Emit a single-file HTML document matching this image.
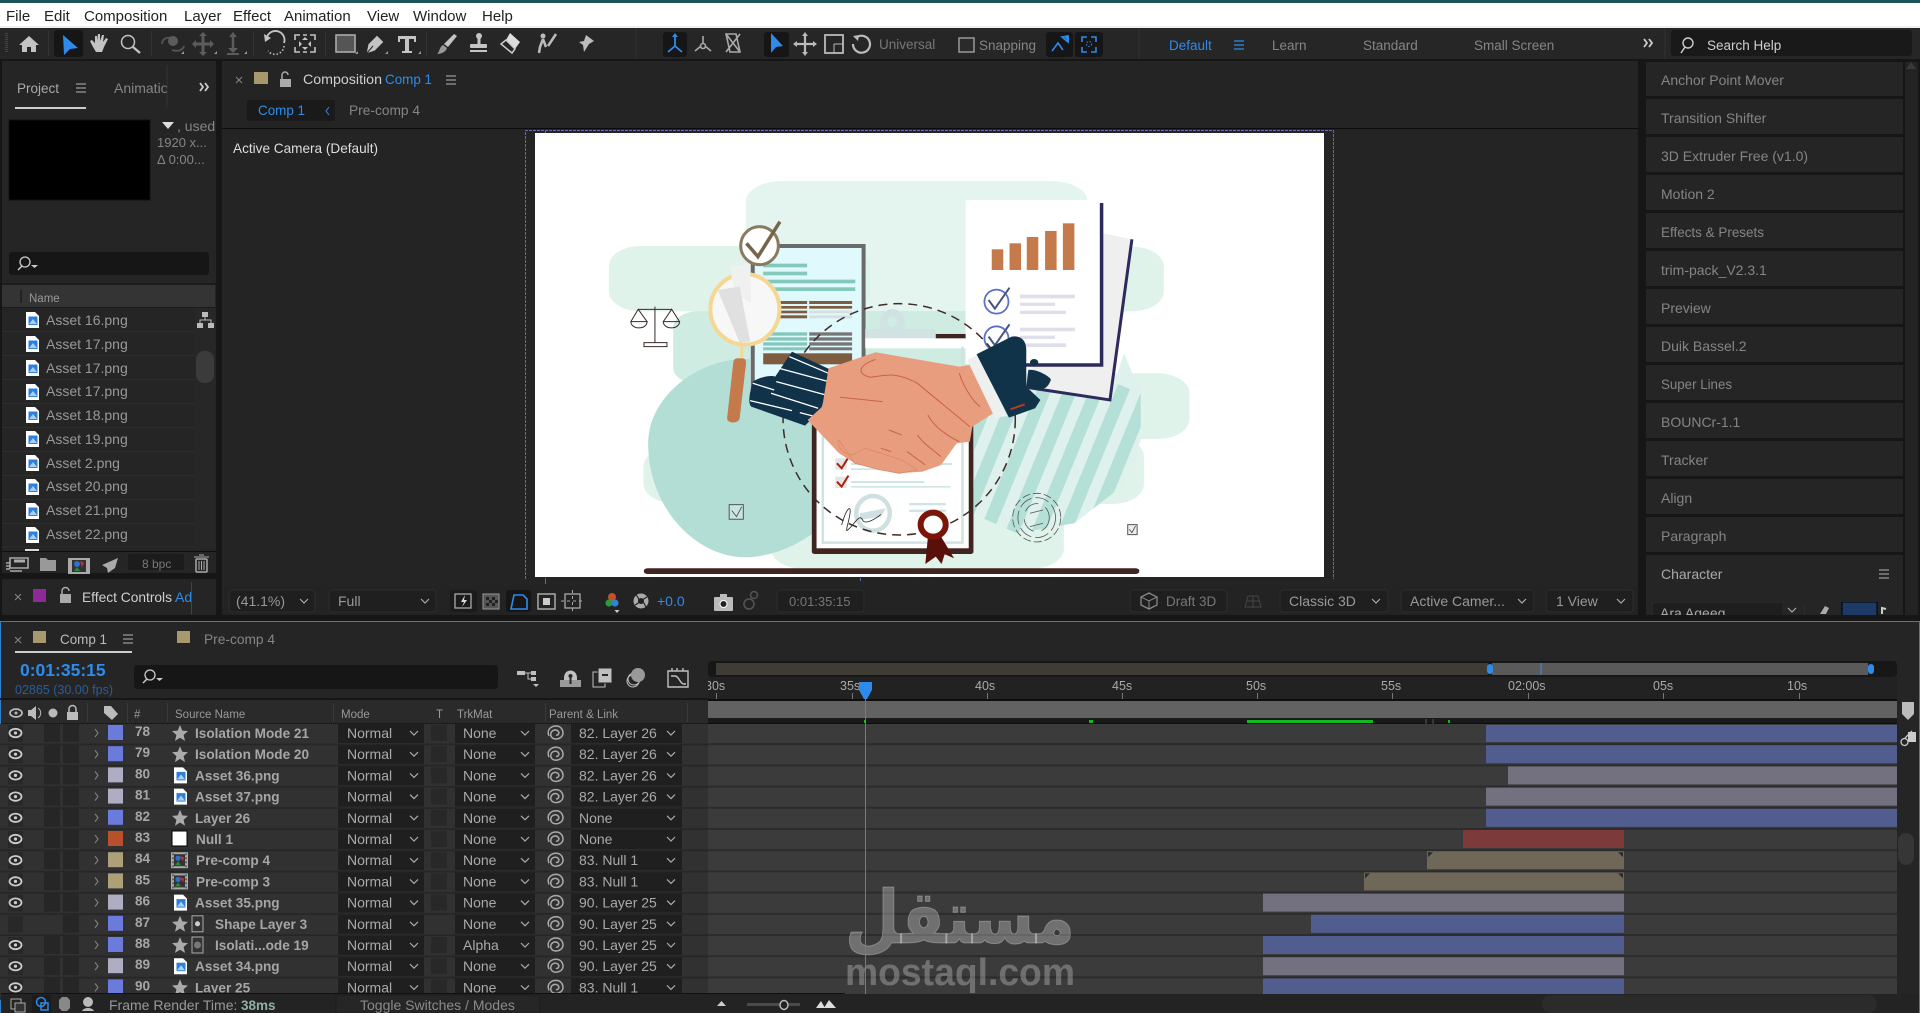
<!DOCTYPE html>
<html lang="en"><head><meta charset="utf-8"><title>After Effects</title>
<style>
html,body{margin:0;padding:0;background:#232323;width:1920px;height:1013px;overflow:hidden}
svg{display:block;position:absolute;left:0;top:0}
text{font-family:"Liberation Sans",sans-serif;font-size:14px;fill:#999;white-space:pre}
.m{font-size:15px;fill:#222}
.g{fill:#858585}.l{fill:#cfcfcf}.b{fill:#2d8ceb}
.w{font-size:13.5px;fill:#858585}
.h{font-size:11.5px;fill:#999}
.n{font-size:13.6px;font-weight:bold;fill:#a6a6a6}
.d{fill:#aaa}
.r{font-size:12.5px;fill:#aaa}
.nss *{vector-effect:non-scaling-stroke}
</style></head><body>
<svg width="1920" height="1013" viewBox="0 0 1920 1013" xmlns="http://www.w3.org/2000/svg">
<defs>
<g id="chev"><polyline points="-4,-2 0,2 4,-2" fill="none" stroke="#aaa" stroke-width="1.2"/></g>
<g id="burger"><path d="M-5-4H5M-5 0H5M-5 4H5" stroke="#999" stroke-width="1.3"/></g>
<g id="png"><path d="M0 0h9l4 4v12H0z" fill="#fff"/><rect x="2.5" y="4.5" width="9" height="8.5" fill="#2f7fd8"/><path d="M3 12l4-5 4 5z" fill="#a8d0f5"/></g>
<g id="star"><path d="M8 0l2.3 5.6 5.7.5-4.4 3.8 1.4 6L8 12.7 3 15.9l1.4-6L0 6.1l5.7-.5z" fill="#aaa"/></g>
<g id="pre"><rect width="17" height="16" fill="#aaa"/><rect x="3" y="2" width="11" height="12" fill="#333"/><path d="M2 1v14M15 1v14" stroke="#222" stroke-dasharray="2 2"/><circle cx="7" cy="6" r="2.6" fill="#2e6fd0"/><path d="M9 4l4 1-1 4z" fill="#c33"/><path d="M4 13l3-4 3 4z" fill="#2a8a3a"/></g>
<g id="row">
<rect x="0" width="708" height="21.2" fill="#313131"/><rect x="708" width="1189" height="21.2" fill="#3b3b3b"/>
<rect x="0" y="19.6" width="708" height="1.6" fill="#262626"/><rect x="708" y="19.2" width="1189" height="2" fill="#2c2c2c"/>
<rect x="8" y="1" width="15" height="17" fill="#282828"/>
<rect x="44" y="0" width="16" height="18" fill="#262626"/><rect x="63" y="0" width="16" height="18" fill="#262626"/>
<polyline points="95,5 98,9 95,13" fill="none" stroke="#8a8a8a"/>
<rect x="338" y="0" width="86" height="19" fill="#1f1f1f"/><use href="#chev" x="414" y="9"/>
<text x="347" y="14" class="d">Normal</text>
<rect x="431" y="1" width="16" height="16" fill="#282828"/>
<rect x="455" y="0" width="80" height="19" fill="#1f1f1f"/><use href="#chev" x="525" y="9"/>
<path d="M549 12C546 5 552 2 556 2 561 2 563 6 563 9 563 13 559 15 556 15 552 15 550 12 551 9 552 6 556 5 558 7 560 9 558 12 556 11" fill="none" stroke="#aaa" stroke-width="1.5"/>
<rect x="571" y="0" width="111" height="19" fill="#1f1f1f"/><use href="#chev" x="671" y="9"/>
</g>
<g id="eye"><ellipse cx="15.5" cy="9" rx="6" ry="4.2" fill="none" stroke="#ccc" stroke-width="1.8"/><circle cx="15.5" cy="9" r="1.6" fill="#ccc"/></g>
<clipPath id="stripeclip"><path d="M1155 700L1187 820V960L1150 1100 1060 1210 950 1240 885 1195 868 1180V900L960 800 1125 840z"/></clipPath>
</defs>

<!-- base -->
<rect width="1920" height="1013" fill="#161616"/>
<rect width="1920" height="3" fill="#1c565c"/>
<rect y="3" width="1920" height="24" fill="#fff"/>
<rect y="26" width="1920" height="2" fill="#efefef"/>
<text x="6" y="21" class="m">File</text><text x="44" y="21" class="m">Edit</text><text x="84" y="21" class="m">Composition</text><text x="184" y="21" class="m">Layer</text><text x="233" y="21" class="m">Effect</text><text x="284" y="21" class="m">Animation</text><text x="367" y="21" class="m">View</text><text x="413" y="21" class="m">Window</text><text x="482" y="21" class="m">Help</text>

<!-- toolbar -->
<rect y="28" width="1920" height="31" fill="#262626"/>
<path d="M6.500 33v19" stroke="#444" stroke-width="3" stroke-dasharray="1 1"/>
<path d="M19 45l10-9 10 9h-3v7h-5v-5h-4v5h-5v-7z" fill="#c4c4c4"/>
<path d="M48.500 31v25M151.500 31v25M253.500 31v25M325.500 31v25M426.500 31v25" stroke="#333"/>
<rect x="54" y="30" width="29" height="27" rx="3" fill="#161616"/>
<path d="M63 35L78 48 70 49 64 55z" fill="#2d8ceb"/>
<path d="M93 47l-3-6 2-1 3 3 0-7 2 0 0 5 1-7 2 0 0 7 2-6 2 0-1 7 3-4 2 1-4 8-2 5h-6z" fill="#c4c4c4"/>
<circle cx="128" cy="42" r="6.500" fill="none" stroke="#c4c4c4" stroke-width="1.500"/><path d="M133 47l7 6" stroke="#c4c4c4" stroke-width="2.200"/>
<g fill="none" stroke="#555" stroke-width="1.800"><path d="M162 44c0-6 6-7 10-6M184 46c-1 4-6 6-12 4"/></g>
<circle cx="173" cy="41" r="5" fill="#5c5c5c"/>
<path d="M203 35v18M194 44h18" stroke="#5c5c5c" stroke-width="3"/><path d="M203 32l-4 4h8zM203 56l-4-4h8zM192 44l4-4v8zM214 44l-4-4v8z" fill="#5c5c5c"/>
<path d="M233 35v14" stroke="#5c5c5c" stroke-width="2.500"/><path d="M233 32l-4 5h8zM233 53l-5-5h10zM227 53h12v2h-12z" fill="#5c5c5c"/>
<path d="M181 54l3-3v3zM214 54l3-3v3zM244 54l3-3v3zM355 54l3-3v3zM385 54l3-3v3zM418 54l3-3v3z" fill="#999"/>
<path d="M267 37a9 9 0 0 1 17 6" fill="none" stroke="#c4c4c4" stroke-width="1.800"/><path d="M284 46a9 9 0 0 1-16 5" fill="none" stroke="#c4c4c4" stroke-width="1.600" stroke-dasharray="1.500 2"/><path d="M264 34l1 8 6-4z" fill="#c4c4c4"/>
<g fill="none" stroke="#c4c4c4" stroke-width="1.600"><path d="M295 40v-5h5M315 40v-5h-5M295 47v5h5M315 47v5h-5M303 35h4M303 52h4"/></g><path d="M302 40l3-3 3 3zM302 47l3 3 3-3zM299 41v6l3-3zM311 41v6l-3-3z" fill="#c4c4c4"/>
<rect x="336" y="35" width="19" height="17" fill="#555" stroke="#aaa" stroke-width="1.600"/>
<path d="M366 54l2-10 9-9 7 7-9 9zM373 46l-6 7" fill="#c4c4c4" stroke="#262626"/>
<path d="M398 36h18v6h-2v-3h-5v12h3v2h-10v-2h3V39h-5v3h-2z" fill="#c4c4c4"/>
<path d="M454 34l3 2-9 11-4-3z" fill="#c4c4c4"/><path d="M443 45l4 3c-1 4-6 6-10 6 3-2 2-7 6-9z" fill="#999"/>
<circle cx="479" cy="36" r="3" fill="#c4c4c4"/><path d="M479 37v7" stroke="#c4c4c4" stroke-width="3"/><rect x="470" y="44" width="17" height="4" rx="1" fill="#c4c4c4"/><rect x="470" y="50" width="17" height="2" fill="#c4c4c4"/>
<path d="M510 33l10 9-5 7-9-9z" fill="#ddd"/><path d="M506 40l9 9-3 4-11-9z" fill="none" stroke="#ccc" stroke-width="1.500"/>
<circle cx="543" cy="36" r="2.500" fill="#bbb"/><path d="M543 39l-3 8-1 6M543 39l3 8M556 34l-8 12" stroke="#bbb" stroke-width="2.500" fill="none"/>
<path d="M586 35l8 6-5 3-5 8-1-7-4-3 5-1z" fill="#bbb"/>
<path d="M636 28v31" stroke="#333"/>
<rect x="663" y="32" width="24" height="25" rx="3" fill="#161616"/>
<g fill="none" stroke="#2d8ceb" stroke-width="1.800"><path d="M675 36v10l-7 6M675 46l7 6"/></g><path d="M675 33l-3 4h6z" fill="#2d8ceb"/>
<g fill="none" stroke="#aaa" stroke-width="1.600"><path d="M703 36v8M695 51l6-5M711 51l-6-5"/><circle cx="703" cy="46" r="2.500"/><path d="M726 34l14 18M740 34l-14 18M726 34h10l4 18h-10z"/></g>
<rect x="764" y="32" width="25" height="25" rx="3" fill="#161616"/><path d="M771 33v20l5-6 7-1z" fill="#2d8ceb"/>
<path d="M805 34v20M795 44h20" stroke="#bbb" stroke-width="2.200"/><path d="M805 32l-3 4h6zM805 56l-3-4h6zM793 44l4-3v6zM817 44l-4-3v6z" fill="#bbb"/>
<rect x="825" y="35" width="18" height="18" fill="none" stroke="#bbb" stroke-width="1.800"/><path d="M834 44h9M834 44v9" stroke="#bbb"/>
<path d="M857 37a8.500 8.500 0 1 1-4 7" fill="none" stroke="#bbb" stroke-width="2.200"/><path d="M853 36l6-1-1 6z" fill="#bbb"/>
<text x="879" y="49" style="fill:#777;font-size:13.500px">Universal</text>
<rect x="959" y="38" width="15" height="14" fill="#2a2a2a" stroke="#999" stroke-width="1.500"/>
<text x="979" y="50" class="w">Snapping</text>
<rect x="1046" y="32" width="27" height="25" rx="3" fill="#161616"/><path d="M1052 51l6-8 5 7M1062 37l6-1v6z" fill="none" stroke="#2d8ceb" stroke-width="1.600"/><path d="M1063 36h6v6z" fill="#2d8ceb"/>
<rect x="1075" y="32" width="28" height="25" rx="3" fill="#161616"/><path d="M1082 42v-5h5M1096 42v-5h-5M1082 47v5h5M1096 47v5h-5" fill="none" stroke="#2d8ceb" stroke-width="1.600"/><circle cx="1089" cy="44" r="2.500" fill="none" stroke="#2d8ceb" stroke-dasharray="1.500 1.500"/>
<path d="M1139 28v31" stroke="#333"/>
<text x="1169" y="50" class="b" style="font-size:13.500px">Default</text>
<g transform="translate(1239 45)"><path d="M-5-4H5M-5 0H5M-5 4H5" stroke="#2d8ceb" stroke-width="1.300"/></g>
<text x="1272" y="50" class="w">Learn</text><text x="1363" y="50" class="w">Standard</text><text x="1474" y="50" class="w">Small Screen</text>
<path d="M1644 39l3 4-3 4M1649 39l3 4-3 4" fill="none" stroke="#ccc" stroke-width="1.800"/>
<path d="M1665 28v31" stroke="#333"/>
<rect x="1671" y="30" width="241" height="26" rx="3" fill="#191919"/>
<circle cx="1688" cy="43" r="5" fill="none" stroke="#ccc" stroke-width="1.400"/><path d="M1685 47l-4 6" stroke="#ccc" stroke-width="1.500"/>
<text x="1707" y="50" class="l" style="font-size:13.500px">Search Help</text>

<!-- project panel -->
<rect x="2" y="61" width="214" height="512" fill="#252525"/>
<text x="17" y="93" style="fill:#aaa;font-size:13.500px">Project</text>
<use href="#burger" x="81" y="88"/>
<rect x="15" y="107" width="71" height="2" fill="#ccc"/>
<svg x="114" y="70" width="53" height="40"><text x="0" y="23" class="g">Animation</text></svg>
<path d="M167 65v43" stroke="#333"/>
<path d="M200 83l3 4-3 4M205 83l3 4-3 4" fill="none" stroke="#ccc" stroke-width="1.800"/>
<rect x="9" y="120" width="141" height="80" fill="#000" stroke="#111"/>
<path d="M162 122h12l-6 7z" fill="#ddd"/>
<text x="177" y="131" class="g">, used</text>
<text x="157" y="147" class="g" style="font-size:13px">1920 x...</text>
<text x="157" y="164" class="g" style="font-size:13px">Δ 0:00...</text>
<rect x="9" y="252" width="200" height="23" rx="3" fill="#161616"/>
<circle cx="25" cy="262" r="5" fill="none" stroke="#ccc" stroke-width="1.300"/><path d="M22 266l-4 4" stroke="#ccc" stroke-width="1.500"/><path d="M31 265h7l-3.500 3z" fill="#ccc"/>
<rect x="2" y="283" width="214" height="2" fill="#1c1c1c"/>
<rect x="2" y="285" width="213" height="22" fill="#343434"/>
<path d="M21 290v13" stroke="#111"/>
<text x="29" y="302" style="font-size:11.500px;fill:#999">Name</text>
<path d="M2 307.500H215" stroke="#111" stroke-dasharray="1 1"/>
<g stroke="#2e2e2e"><path d="M2 331.500H195M2 355.500H195M2 379.500H195M2 403.500H195M2 427.500H195M2 451.500H195M2 475.500H195M2 499.500H195M2 523.500H195M2 547H195"/></g>
<rect x="195" y="308" width="20" height="243" fill="#272727"/>
<rect x="196" y="351" width="18" height="32" rx="8" fill="#3b3b3b"/>
<g fill="#bbb"><rect x="202" y="312" width="6" height="5"/><rect x="197" y="323" width="6" height="5"/><rect x="208" y="323" width="6" height="5"/><path d="M200 323v-3h11v3M205 317v3" fill="none" stroke="#bbb"/></g>
<g><use href="#png" x="26" y="312"/><use href="#png" x="26" y="336"/><use href="#png" x="26" y="360"/><use href="#png" x="26" y="384"/><use href="#png" x="26" y="407"/><use href="#png" x="26" y="431"/><use href="#png" x="26" y="455"/><use href="#png" x="26" y="479"/><use href="#png" x="26" y="503"/><use href="#png" x="26" y="527"/></g>
<text x="46" y="325">Asset 16.png</text><text x="46" y="349">Asset 17.png</text><text x="46" y="373">Asset 17.png</text><text x="46" y="396">Asset 17.png</text><text x="46" y="420">Asset 18.png</text><text x="46" y="444">Asset 19.png</text><text x="46" y="468">Asset 2.png</text><text x="46" y="491">Asset 20.png</text><text x="46" y="515">Asset 21.png</text><text x="46" y="539">Asset 22.png</text>
<rect x="2" y="549" width="214" height="24" fill="#252525"/>
<rect x="25" y="549" width="14" height="2" fill="#ddd"/>
<rect x="2" y="551" width="214" height="1" fill="#0f0f0f"/>
<path d="M10 558h18v10H10zM6 563h4M6 566h4M6 569h4M10 571h12" fill="none" stroke="#aaa" stroke-width="1.600"/><path d="M14 561h11" stroke="#aaa" stroke-width="3"/>
<path d="M40 558h6l2 2h8v11H40z" fill="#999"/>
<rect x="68" y="558" width="22" height="16" fill="#aaa"/><rect x="72" y="560" width="14" height="12" fill="#333"/><circle cx="77" cy="564" r="3" fill="#2e6fd0"/><path d="M80 561l4 2-2 4z" fill="#c33"/><path d="M74 571l3-4 3 4z" fill="#2a8a3a"/>
<path d="M102 565l16-7-3 10-7 5-1-5z" fill="#aaa"/>
<rect x="127" y="553" width="58" height="18" rx="3" fill="#1c1c1c" stroke="#2c2c2c"/>
<text x="142" y="568" style="font-size:12px;fill:#777">8 bpc</text>
<rect x="196" y="559" width="11" height="13" rx="1" fill="none" stroke="#aaa" stroke-width="1.500"/><path d="M194 557h15M199 555h5M199 561v9M201.500 561v9M204 561v9" stroke="#aaa"/>

<!-- effect controls tab -->
<rect x="2" y="579" width="214" height="36" fill="#252525"/>
<path d="M15 594l6 6M21 594l-6 6" stroke="#888"/>
<rect x="33" y="589" width="13" height="13" fill="#8e2a97"/>
<rect x="60" y="594" width="11" height="9" fill="#aaa"/><path d="M62 594v-3a3.500 3.500 0 0 1 7 0" fill="none" stroke="#aaa" stroke-width="1.500"/>
<text x="82" y="602" class="l" textLength="90" lengthAdjust="spacingAndGlyphs">Effect Controls</text><text x="175" y="602" class="b">Ad</text>
<path d="M191.500 582v32" stroke="#444"/>

<!-- composition panel -->
<rect x="222" y="61" width="1416" height="554" fill="#242424"/>
<path d="M236 77l6 6M242 77l-6 6" stroke="#888"/>
<rect x="254" y="72" width="14" height="12" fill="#a8986e"/>
<rect x="280" y="79" width="11" height="8" fill="#aaa"/><path d="M282 79v-4a3 3 0 0 1 6 0" fill="none" stroke="#aaa" stroke-width="1.500"/>
<text x="303" y="84" class="l" textLength="79" lengthAdjust="spacingAndGlyphs">Composition</text><text x="385" y="84" class="b" textLength="47" lengthAdjust="spacingAndGlyphs">Comp 1</text>
<use href="#burger" x="451" y="80"/>
<rect x="247" y="100" width="88" height="21" rx="2" fill="#1a1a1a"/>
<text x="258" y="115" class="b" textLength="47" lengthAdjust="spacingAndGlyphs">Comp 1</text><polyline points="329,107 326,111 329,115" fill="none" stroke="#2d8ceb"/>
<text x="349" y="115" class="g" textLength="71" lengthAdjust="spacingAndGlyphs">Pre-comp 4</text>
<rect x="222" y="128" width="1416" height="1" fill="#0c0c0c"/>
<text x="233" y="153" style="fill:#ddd" textLength="145" lengthAdjust="spacingAndGlyphs">Active Camera (Default)</text>

<!-- viewer -->
<path d="M525.500 579V130.500H1333.500V579" fill="none" stroke="#5a6cc0" stroke-dasharray="3 1"/>
<path d="M545.500 130v4M545.500 578v6M860.500 578v3" stroke="#5a6cc0"/>
<rect x="535" y="133" width="789" height="444" fill="#fff"/>
<g class="nss" transform="translate(520 120) scale(.523 .3333)">
<g fill="#e4f5ef">
<rect x="432" y="183" width="653" height="420" rx="70" ry="60"/>
</g>
<g fill="#dff3ea">
<rect x="170" y="378" width="500" height="196" rx="60"/>
<rect x="900" y="380" width="331" height="194" rx="60"/>
<rect x="900" y="760" width="380" height="197" rx="60"/>
<rect x="880" y="950" width="313" height="202" rx="60"/>
<rect x="236" y="980" width="400" height="170" rx="60"/>
<rect x="480" y="1100" width="560" height="246" rx="60"/>
</g>
<rect x="293" y="573" width="630" height="220" rx="50" fill="#cfece2"/>
<g clip-path="url(#stripeclip)"><rect x="860" y="690" width="340" height="560" fill="#dff1ec"/>
<g stroke="#b5e0d7" stroke-width="13" fill="none"><path d="M790 1240L905 800M840 1240L955 800M890 1240L1005 800M940 1240L1055 800M990 1240L1105 800M1040 1240L1155 800M1090 1240L1205 800M1140 1240L1255 800"/></g></g>
<path d="M430 717C520 717 640 850 640 1020 640 1190 520 1312 430 1312 340 1312 245 1170 245 970 245 830 340 717 430 717z" fill="#b2ded5"/>
<!-- back doc -->
<rect x="440" y="372" width="222" height="452" fill="#dff9fc" stroke="none"/>
<path d="M445 378H657V820H445z" fill="none" stroke="#6a6a6a" stroke-width="4"/>
<g fill="#85c7bb"><rect x="465" y="431" width="84" height="11"/><rect x="465" y="455" width="84" height="11"/><rect x="465" y="479" width="176" height="11"/><rect x="465" y="502" width="176" height="11"/><rect x="465" y="637" width="84" height="10"/><rect x="465" y="652" width="84" height="10"/><rect x="465" y="667" width="84" height="10"/><rect x="465" y="682" width="84" height="9"/></g>
<g fill="#7d5c3f"><rect x="465" y="543" width="84" height="9"/><rect x="465" y="558" width="84" height="8"/><rect x="465" y="572" width="84" height="8"/><rect x="465" y="586" width="84" height="9"/><rect x="553" y="543" width="82" height="9"/><rect x="553" y="558" width="82" height="8"/><rect x="465" y="700" width="170" height="33"/></g>
<g fill="#d5dfe0"><rect x="553" y="572" width="82" height="8"/><rect x="553" y="586" width="82" height="9"/></g>
<g fill="#777"><rect x="553" y="637" width="82" height="10"/><rect x="553" y="652" width="82" height="10"/><rect x="553" y="667" width="82" height="10"/><rect x="553" y="682" width="82" height="9"/></g>
<!-- right doc -->
<path d="M1116 340L1170 358 1128 840 960 800z" fill="#efefef"/>
<path d="M1170 358L1128 840 960 800" fill="none" stroke="#2e2a5e" stroke-width="3"/>
<rect x="852" y="240" width="258" height="492" fill="#fff"/>
<path d="M1112 249V735H960" fill="none" stroke="#2e2a5e" stroke-width="3.500"/>
<g fill="#c47a4b"><rect x="902" y="388" width="22" height="62"/><rect x="936" y="370" width="22" height="80"/><rect x="969" y="351" width="22" height="99"/><rect x="1004" y="333" width="22" height="117"/><rect x="1038" y="310" width="22" height="140"/></g>
<ellipse cx="911" cy="545" rx="23" ry="36" fill="none" stroke="#5b70c8" stroke-width="1.800"/>
<polyline points="896,540 908,566 936,503" fill="none" stroke="#46557f" stroke-width="2"/>
<ellipse cx="911" cy="655" rx="23" ry="36" fill="none" stroke="#5b70c8" stroke-width="1.800"/>
<polyline points="896,650 908,676 936,613" fill="none" stroke="#46557f" stroke-width="2"/>
<g fill="#dfdfea"><rect x="956" y="524" width="105" height="11"/><rect x="956" y="548" width="67" height="10"/><rect x="956" y="572" width="88" height="10"/><rect x="956" y="623" width="105" height="11"/><rect x="956" y="647" width="67" height="10"/><rect x="956" y="670" width="88" height="11"/></g>
<!-- clipboard -->
<ellipse cx="712" cy="605" rx="24" ry="38" fill="#d0e2e2"/><ellipse cx="712" cy="605" rx="9" ry="16" fill="#cfece2"/>
<rect x="660" y="628" width="135" height="30" fill="#d0e2e2"/>
<rect x="660" y="655" width="200" height="30" fill="#fff"/>
<rect x="795" y="642" width="57" height="13" fill="#3f2420"/>
<rect x="558" y="880" width="309" height="422" rx="6" fill="#3f2420"/>
<rect x="567" y="880" width="291" height="405" fill="#fff"/>
<path d="M579 880V1268H846V680" fill="none" stroke="#d0e2e2" stroke-width="2.500"/>
<g fill="#e4e4e4"><rect x="603" y="1015" width="22" height="34"/><rect x="603" y="1070" width="22" height="34"/></g>
<polyline points="606,1030 615,1045 628,1012" fill="none" stroke="#a82010" stroke-width="2"/>
<polyline points="606,1085 615,1100 628,1067" fill="none" stroke="#a82010" stroke-width="2"/>
<g fill="#cfe5e4"><rect x="633" y="1029" width="193" height="6"/><rect x="633" y="1045" width="100" height="5"/><rect x="633" y="1083" width="140" height="6"/><rect x="633" y="1098" width="190" height="5"/><rect x="744" y="1149" width="70" height="7"/><rect x="744" y="1169" width="70" height="7"/></g>
<ellipse cx="675" cy="1180" rx="32" ry="52" fill="none" stroke="#cfe0e2" stroke-width="4.500"/>
<path d="M650 1180L700 1165 690 1190 650 1200z" fill="#cfe0e2"/>
<path d="M615 1215C625 1160 635 1150 630 1190S620 1240 630 1225 650 1180 655 1200 690 1185 690 1183" fill="none" stroke="#222" stroke-width=".8"/>
<!-- dashed circle -->
<ellipse cx="725" cy="898" rx="222" ry="347" fill="none" stroke="#3f2a28" stroke-width="1.500" stroke-dasharray="9 6"/>
<!-- ribbon -->
<path d="M780 1250H805L830 1315 812 1303 806 1332 795 1310 775 1332z" fill="#5a0f0a"/>
<ellipse cx="790" cy="1214" rx="24" ry="36" fill="#fff" stroke="#7a1508" stroke-width="6"/>
<!-- magnifier -->
<path d="M420 715C435 715 433 720 430 760L420 895C418 912 396 912 396 895L408 725C409 715 415 715 420 715z" fill="#c47a4b"/>
<ellipse cx="430" cy="568" rx="66" ry="106" fill="#f7f7f7" stroke="#f5d793" stroke-width="4"/>
<path d="M400 440l40-10 2 120-30-30z" fill="#f0f0f0"/>
<path d="M378 510L420 500 440 665 420 668z" fill="#e0e0e0"/>
<path d="M424 672v40" stroke="#f5d793" stroke-width="3"/>
<!-- check -->
<ellipse cx="458" cy="377" rx="36" ry="57" fill="#fff" stroke="#8a7a60" stroke-width="3"/>
<polyline points="433,370 455,410 497,305" fill="none" stroke="#75654b" stroke-width="3.500"/>
<!-- scales -->
<g fill="none" stroke="#3a2a2a" stroke-width="1"><path d="M258 560V668M226 568H290"/><rect x="237" y="668" width="44" height="12"/><path d="M226 568L212 605H243zM290 568L274 605H305z"/><path d="M212 605c0 25 31 25 31 0M274 605c0 25 31 25 31 0"/></g>
<!-- sleeve left -->
<path d="M520 695L592 748 590 800 575 870 545 917 442 860C436 850 438 825 445 785 460 770 480 765 488 770z" fill="#10334a"/>
<g stroke="#fff" stroke-width="1.300" fill="none"><path d="M515 710L590 760M495 745L590 785M490 785L585 825M445 790L486 810M480 820L570 865M440 842L520 872M535 878L560 888"/></g>
<!-- hand -->
<path d="M590 745L680 697 840 740 860 735 905 880 865 920 860 965 835 970 805 1035 770 1055 725 1060 690 1050 640 1030 610 1000 550 900 578 860z" fill="#e89e7e"/>
<g fill="none" stroke="#c9604e" stroke-width="1"><path d="M680 718C650 735 640 760 670 772 700 765 720 755 760 790 790 830 830 880 860 920M612 832L693 845M840 760C850 810 870 850 880 860M705 930L730 945M780 885C790 920 820 950 840 965M760 945C770 970 790 990 805 1010M740 995L775 1035M690 985L710 995"/></g>
<path d="M610 960C605 985 620 1000 635 1005L660 985 690 1000 730 1020 760 1050 725 1060 690 1050 640 1030z" fill="#e89e7e" stroke="#d88a6a" stroke-width=".8"/>
<!-- cuff right -->
<path d="M855 720L875 705 932 888 908 893z" fill="#eef0ef"/>
<path d="M873 703L940 650C960 645 968 665 968 690L968 800 995 840 985 865 935 893z" fill="#10334a"/>
<path d="M938 868L965 853" stroke="#b83a20" stroke-width="2"/>
<path d="M972 750C985 745 1015 770 1015 780 1010 800 1005 810 985 808L968 800z" fill="#10334a"/>
<ellipse cx="983" cy="727" rx="8" ry="10" fill="#10334a"/>
<!-- boxes -->
<rect x="400" y="1154" width="27" height="44" fill="#c8e5df" stroke="#555" stroke-width="1"/><polyline points="405,1172 414,1190 424,1160" fill="none" stroke="#444" stroke-width=".8"/>
<rect x="1162" y="1214" width="18" height="30" fill="#eee" stroke="#555" stroke-width="1"/><polyline points="1165,1228 1170,1238 1177,1218" fill="none" stroke="#444" stroke-width=".8"/>
<g fill="none" stroke="#555" stroke-width=".8"><ellipse cx="988" cy="1193" rx="46" ry="73" stroke-dasharray="8 3"/><ellipse cx="988" cy="1193" rx="36" ry="60" stroke-dasharray="14 4"/><ellipse cx="988" cy="1193" rx="24" ry="42" stroke-dasharray="16 8"/><path d="M975 1180L1000 1170M975 1220L1000 1210"/></g>
<rect x="237" y="1345" width="947" height="17" rx="8" ry="6" fill="#3f2420"/>
</g>

<!-- comp bottom bar -->
<rect x="222" y="586" width="1416" height="29" fill="#232323"/>
<g fill="#1f1f1f" stroke="#2e2e2e"><rect x="229" y="590" width="86" height="22" rx="3"/><rect x="329" y="590" width="107" height="22" rx="3"/><rect x="777" y="590" width="87" height="22" rx="3"/><rect x="1130" y="590" width="97" height="22" rx="3"/><rect x="1280" y="590" width="108" height="22" rx="3"/><rect x="1401" y="590" width="133" height="22" rx="3"/><rect x="1546" y="590" width="87" height="22" rx="3"/></g>
<text x="236" y="606">(41.1%)</text><use href="#chev" x="304" y="601"/>
<text x="338" y="606">Full</text><use href="#chev" x="425" y="601"/>
<rect x="450" y="590" width="27" height="22" rx="3" fill="#1b1b1b"/>
<rect x="455" y="594" width="16" height="14" fill="none" stroke="#aaa" stroke-width="1.300"/><path d="M465 595l-4 7h3l-2 5 5-7h-3z" fill="#ddd"/>
<rect x="483" y="594" width="16" height="15" fill="#555" stroke="#999"/><path d="M486 597h3v3h-3zM492 597h3v3h-3zM489 600h3v3h-3zM495 600h3v3h-3zM486 603h3v3h-3zM492 603h3v3h-3z" fill="#222"/>
<rect x="506" y="590" width="25" height="22" rx="3" fill="#161616"/>
<path d="M511 609l3-14h9l4 4v10z" fill="none" stroke="#2d8ceb" stroke-width="1.600"/>
<rect x="538" y="594" width="17" height="15" fill="none" stroke="#aaa" stroke-width="1.500"/><rect x="543" y="598" width="7" height="7" fill="#ccc"/>
<rect x="565" y="594" width="15" height="14" fill="none" stroke="#aaa" stroke-width="1.300"/><path d="M572.500 590v22M561 601h23" stroke="#aaa" stroke-dasharray="3 3"/>
<circle cx="612" cy="597" r="4" fill="#c2512a"/><circle cx="609" cy="603" r="3.600" fill="#2a9a3a"/><circle cx="615" cy="603" r="3.600" fill="#2e82d8"/>
<path d="M614.500 610h5l-2.500 3z" fill="#ccc"/>
<circle cx="641" cy="601" r="7.500" fill="#aaa"/><circle cx="641" cy="601" r="3" fill="#232323"/><path d="M636 595c2 2 3 4 3 6M647 597c-2 1-4 2-5 4M646 607c-1-2-2-4-3-5M635 605c2-1 4-2 5-4" stroke="#232323" stroke-width="1.200" fill="none"/>
<text x="657" y="606" class="b">+0.0</text>
<rect x="714" y="597" width="19" height="14" rx="1" fill="#bbb"/><rect x="720" y="594" width="7" height="3" fill="#bbb"/><circle cx="723.500" cy="604" r="3.500" fill="#232323" stroke="#fff"/>
<g fill="none" stroke="#555" stroke-width="1.500"><circle cx="749" cy="604" r="5"/><circle cx="754" cy="595" r="3.500"/></g>
<text x="789" y="606" style="fill:#777;font-size:13px">0:01:35:15</text>
<path d="M1149 593l8 4v8l-8 4-8-4v-8z" fill="none" stroke="#888" stroke-width="1.300"/><path d="M1141 597l8 4 8-4M1149 601v8" fill="none" stroke="#888"/>
<text x="1166" y="606" style="fill:#777;font-size:13.500px">Draft 3D</text>
<path d="M1248 596h10l3 11h-16zM1253 596v11M1246 601h14" fill="none" stroke="#444"/>
<text x="1289" y="606">Classic 3D</text><use href="#chev" x="1376" y="601"/>
<text x="1410" y="606">Active Camer...</text><use href="#chev" x="1522" y="601"/>
<text x="1556" y="606">1 View</text><use href="#chev" x="1621" y="601"/>

<!-- right panels -->
<g fill="#252525"><rect x="1646" y="62" width="257" height="34"/><rect x="1646" y="99" width="257" height="35"/><rect x="1646" y="137" width="257" height="35"/><rect x="1646" y="175" width="257" height="35"/><rect x="1646" y="213" width="257" height="35"/><rect x="1646" y="251" width="257" height="35"/><rect x="1646" y="289" width="257" height="35"/><rect x="1646" y="327" width="257" height="35"/><rect x="1646" y="365" width="257" height="35"/><rect x="1646" y="403" width="257" height="35"/><rect x="1646" y="441" width="257" height="35"/><rect x="1646" y="479" width="257" height="35"/><rect x="1646" y="517" width="257" height="35"/><rect x="1646" y="555" width="257" height="60"/></g>
<rect x="1905" y="62" width="13" height="553" fill="#232323"/>
<path d="M1911 62l-5 7h10z" fill="#3a3a3a"/>
<g><text x="1661" y="85" class="g">Anchor Point Mover</text><text x="1661" y="123" class="g">Transition Shifter</text><text x="1661" y="161" class="g">3D Extruder Free (v1.0)</text><text x="1661" y="199" class="g">Motion 2</text><text x="1661" y="237" class="g" textLength="103" lengthAdjust="spacingAndGlyphs">Effects &amp; Presets</text><text x="1661" y="275" class="g">trim-pack_V2.3.1</text><text x="1661" y="313" class="g">Preview</text><text x="1661" y="351" class="g">Duik Bassel.2</text><text x="1661" y="389" class="g" textLength="71" lengthAdjust="spacingAndGlyphs">Super Lines</text><text x="1661" y="427" class="g">BOUNCr-1.1</text><text x="1661" y="465" class="g">Tracker</text><text x="1661" y="503" class="g">Align</text><text x="1661" y="541" class="g">Paragraph</text><text x="1661" y="579" style="fill:#aaa">Character</text></g>
<use href="#burger" x="1884" y="574"/>
<svg x="1652" y="602" width="252" height="13">
<rect x="0" y="0" width="152" height="30" rx="3" fill="#1e1e1e" stroke="#333"/><rect x="130" y="0" width="22" height="30" fill="#252525"/>
<text x="8" y="16" style="fill:#aaa">Ara Aqeeq</text><use href="#chev" x="140" y="8"/>
<path d="M168 12l5-8 4 2-3 6z" fill="#aaa"/>
<rect x="190" y="0" width="35" height="20" fill="#1e3a66" stroke="#000"/>
<path d="M230 12V6l4 1" fill="none" stroke="#ccc" stroke-width="2"/>
</svg>

<!-- timeline panel -->
<rect x="0" y="616" width="1920" height="397" fill="#161616"/>
<rect x="0" y="621" width="1920" height="392" fill="#252525"/>
<path d="M.5 1013V621.500H1919.500V1013" fill="none" stroke="#2d7fd0"/>
<path d="M15 637l6 6M21 637l-6 6" stroke="#888"/>
<rect x="33" y="631" width="13" height="12" fill="#a8986e"/>
<text x="60" y="644" style="fill:#bbb" textLength="47" lengthAdjust="spacingAndGlyphs">Comp 1</text>
<use href="#burger" x="128" y="639"/>
<rect x="15" y="651" width="117" height="2" fill="#ccc"/>
<rect x="177" y="631" width="13" height="12" fill="#a8986e"/>
<text x="204" y="644" class="g" textLength="71" lengthAdjust="spacingAndGlyphs">Pre-comp 4</text>
<text x="20" y="676" style="font-size:17.500px;font-weight:bold;fill:#2d8ceb">0:01:35:15</text>
<text x="15" y="694" style="font-size:12.500px;fill:#2a5c9a">02865 (30.00 fps)</text>
<rect x="134" y="665" width="364" height="24" rx="3" fill="#161616"/>
<circle cx="150" cy="675" r="5" fill="none" stroke="#ccc" stroke-width="1.300"/><path d="M147 679l-4 4" stroke="#ccc" stroke-width="1.500"/><path d="M156 678h7l-3.500 3z" fill="#ccc"/>
<!-- timeline switches -->
<g fill="#c0c0c0">
<path d="M517 671h8v4h-8zM531 671h5v4h-5zM531 677h5v4h-5zM533 684h6l-3 3z"/><path d="M525 673h6M528 673v6h3" stroke="#c0c0c0" fill="none"/>
<path d="M560 680h21v7h-21z" fill="#999"/><path d="M564 680v-2c0-10 13-10 13 0v2z"/><circle cx="570.500" cy="676" r="2" fill="#252525"/><rect x="569.500" y="678" width="2" height="6" fill="#252525"/>
<rect x="593" y="672" width="12" height="15" fill="none" stroke="#c0c0c0"/><rect x="598" y="668" width="14" height="15" stroke="#252525"/><path d="M602 675h6" stroke="#252525" stroke-width="2"/>
<circle cx="633" cy="681" r="6" fill="none" stroke="#c0c0c0"/><circle cx="634" cy="679" r="6" fill="none" stroke="#c0c0c0"/><circle cx="638" cy="675" r="7" fill="#999"/>
</g>
<path d="M668 671h20v16h-20zM672 671v-3M677 671v-3M683 671v-3M671 676h4c4 0 5 8 9 8h2" fill="none" stroke="#c0c0c0" stroke-width="1.400"/>
<!-- layer header -->
<rect x="0" y="698" width="708" height="2" fill="#161616"/>
<rect x="1" y="700" width="707" height="23" fill="#2a2a2a"/>
<path d="M1 723.500H708" stroke="#111" stroke-dasharray="1 1"/>
<ellipse cx="16" cy="713" rx="6" ry="4" fill="none" stroke="#bbb" stroke-width="1.700"/><circle cx="16" cy="713" r="1.500" fill="#bbb"/>
<path d="M28 710h3l5-4v14l-5-4h-3z" fill="#bbb"/><path d="M38 708a6 6 0 0 1 0 10" fill="none" stroke="#bbb"/><circle cx="53" cy="713" r="4.500" fill="#bbb"/>
<rect x="67" y="712" width="11" height="8" fill="#bbb"/><path d="M69 712v-3a3.500 3.500 0 0 1 7 0v3" fill="none" stroke="#bbb" stroke-width="1.500"/>
<path d="M104 706h7l7 8-6 6-8-7z" fill="#bbb"/>
<path d="M87.500 703v19M127.500 703v19M167.500 703v19M333.500 703v19M545.500 703v19M687.500 703v19" stroke="#3a3a3a"/>
<text x="134" y="718" class="h">#</text><text x="175" y="718" class="h">Source Name</text><text x="341" y="718" class="h">Mode</text><text x="436" y="718" class="h">T</text><text x="457" y="718" class="h">TrkMat</text><text x="549" y="718" class="h">Parent &amp; Link</text>

<!-- ruler -->
<rect x="708" y="677" width="1189" height="22" fill="#222"/>
<rect x="708" y="661" width="1189" height="16" rx="4" fill="#171717"/>
<rect x="716" y="663" width="772" height="12" fill="#3e3c34"/>
<rect x="1492" y="663" width="376" height="12" fill="#5a5a5a"/>
<rect x="1487" y="664" width="6" height="10" rx="3" fill="#2d8ceb"/><rect x="1868" y="664" width="6" height="10" rx="3" fill="#2d8ceb"/>
<path d="M1541 663v12" stroke="#3f8ed8"/>
<g><svg x="708" y="677" width="20" height="22"><text x="-3" y="13" class="r">30s</text></svg>
<text x="840" y="690" class="r">35s</text><text x="975" y="690" class="r">40s</text><text x="1112" y="690" class="r">45s</text><text x="1246" y="690" class="r">50s</text><text x="1381" y="690" class="r">55s</text><text x="1508" y="690" class="r">02:00s</text><text x="1653" y="690" class="r">05s</text><text x="1787" y="690" class="r">10s</text></g>
<path d="M716.500 693v6M852.500 693v6M987.500 693v6M1122.500 693v6M1257.500 693v6M1392.500 693v6M1528.500 693v6M1663.500 693v6M1799.500 693v6" stroke="#777"/>
<rect x="708" y="699" width="1189" height="2" fill="#0e0e0e"/>
<rect x="708" y="701" width="1189" height="17" fill="#626262"/>
<rect x="708" y="718" width="1189" height="6" fill="#191919"/>
<rect x="708" y="723" width="1189" height="1" fill="#0e0e0e"/>
<g fill="#14b81f"><rect x="864" y="720" width="2" height="3"/><rect x="1089" y="720" width="4" height="3"/><rect x="1247" y="720" width="126" height="3"/><rect x="1448" y="720" width="2" height="3"/></g>
<path d="M1426 719v5M1433 719v5" stroke="#555"/>

<!-- rows -->
<g transform="translate(0 724)"><use href="#row"/><use href="#eye"/><rect x="108" y="1" width="15" height="15" fill="#6a7bdc"/><text x="135" y="12" class="n">78</text><use href="#star" x="172" y="1"/><text x="195" y="14" class="n">Isolation Mode 21</text><text x="463" y="14" class="d">None</text><text x="579" y="14" class="d">82. Layer 26</text><rect x="1486" y="1" width="411" height="17" fill="#515c8f"/></g>
<g transform="translate(0 745.200)"><use href="#row"/><use href="#eye"/><rect x="108" y="1" width="15" height="15" fill="#6a7bdc"/><text x="135" y="12" class="n">79</text><use href="#star" x="172" y="1"/><text x="195" y="14" class="n">Isolation Mode 20</text><text x="463" y="14" class="d">None</text><text x="579" y="14" class="d">82. Layer 26</text><rect x="1486" y="0" width="411" height="18" fill="#515c8f"/></g>
<g transform="translate(0 766.400)"><use href="#row"/><use href="#eye"/><rect x="108" y="1" width="15" height="15" fill="#aeadc4"/><text x="135" y="12" class="n">80</text><use href="#png" x="174" y="1"/><text x="195" y="14" class="n">Asset 36.png</text><text x="463" y="14" class="d">None</text><text x="579" y="14" class="d">82. Layer 26</text><rect x="1508" y="0" width="389" height="18" fill="#737080"/></g>
<g transform="translate(0 787.600)"><use href="#row"/><use href="#eye"/><rect x="108" y="1" width="15" height="15" fill="#aeadc4"/><text x="135" y="12" class="n">81</text><use href="#png" x="174" y="1"/><text x="195" y="14" class="n">Asset 37.png</text><text x="463" y="14" class="d">None</text><text x="579" y="14" class="d">82. Layer 26</text><rect x="1486" y="0" width="411" height="18" fill="#737080"/></g>
<g transform="translate(0 808.800)"><use href="#row"/><use href="#eye"/><rect x="108" y="1" width="15" height="15" fill="#6a7bdc"/><text x="135" y="12" class="n">82</text><use href="#star" x="172" y="1"/><text x="195" y="14" class="n">Layer 26</text><text x="463" y="14" class="d">None</text><text x="579" y="14" class="d">None</text><rect x="1486" y="0" width="411" height="18" fill="#515c8f"/></g>
<g transform="translate(0 830)"><use href="#row"/><use href="#eye"/><rect x="108" y="1" width="15" height="15" fill="#b9502c"/><text x="135" y="12" class="n">83</text><rect x="172" y="1" width="15" height="15" fill="#fff" stroke="#000"/><text x="196" y="14" class="n">Null 1</text><text x="463" y="14" class="d">None</text><text x="579" y="14" class="d">None</text><rect x="1463" y="0" width="161" height="18" fill="#7d3a3a"/></g>
<g transform="translate(0 851.200)"><use href="#row"/><use href="#eye"/><rect x="108" y="1" width="15" height="15" fill="#ad9f78"/><text x="135" y="12" class="n">84</text><use href="#pre" x="171" y="1"/><text x="196" y="14" class="n">Pre-comp 4</text><text x="463" y="14" class="d">None</text><text x="579" y="14" class="d">83. Null 1</text><rect x="1427" y="0" width="197" height="18" fill="#6f6758"/><path d="M1428 1h5l-5 5zM1623 1h-5l5 5z" fill="#2a2a2a"/></g>
<g transform="translate(0 872.400)"><use href="#row"/><use href="#eye"/><rect x="108" y="1" width="15" height="15" fill="#ad9f78"/><text x="135" y="12" class="n">85</text><use href="#pre" x="171" y="1"/><text x="196" y="14" class="n">Pre-comp 3</text><text x="463" y="14" class="d">None</text><text x="579" y="14" class="d">83. Null 1</text><rect x="1364" y="0" width="260" height="18" fill="#6f6758"/><path d="M1365 1h5l-5 5zM1623 1h-5l5 5z" fill="#2a2a2a"/></g>
<g transform="translate(0 893.600)"><use href="#row"/><use href="#eye"/><rect x="108" y="1" width="15" height="15" fill="#aeadc4"/><text x="135" y="12" class="n">86</text><use href="#png" x="174" y="1"/><text x="195" y="14" class="n">Asset 35.png</text><text x="463" y="14" class="d">None</text><text x="579" y="14" class="d">90. Layer 25</text><rect x="1263" y="0" width="361" height="18" fill="#737080"/></g>
<g transform="translate(0 914.800)"><use href="#row"/><rect x="40" y="0" width="21" height="19" fill="#313131"/><rect x="431" y="1" width="16" height="16" fill="#313131"/><rect x="108" y="1" width="15" height="15" fill="#6a7bdc"/><text x="135" y="12" class="n">87</text><use href="#star" x="172" y="1"/><rect x="192" y="1" width="11" height="16" fill="#333" stroke="#aaa"/><circle cx="197.500" cy="9" r="2.500" fill="#ccc"/><text x="215" y="14" class="n">Shape Layer 3</text><text x="463" y="14" class="d">None</text><text x="579" y="14" class="d">90. Layer 25</text><rect x="1311" y="0" width="313" height="18" fill="#515c8f"/></g>
<g transform="translate(0 936)"><use href="#row"/><use href="#eye"/><rect x="108" y="1" width="15" height="15" fill="#6a7bdc"/><text x="135" y="12" class="n">88</text><use href="#star" x="172" y="1"/><rect x="192" y="1" width="11" height="16" fill="#333" stroke="#aaa"/><circle cx="197.500" cy="9" r="3.500" fill="#777"/><text x="215" y="14" class="n">Isolati...ode 19</text><text x="463" y="14" class="d">Alpha</text><text x="579" y="14" class="d">90. Layer 25</text><rect x="1263" y="0" width="361" height="18" fill="#515c8f"/></g>
<g transform="translate(0 957.200)"><use href="#row"/><use href="#eye"/><rect x="108" y="1" width="15" height="15" fill="#aeadc4"/><text x="135" y="12" class="n">89</text><use href="#png" x="174" y="1"/><text x="195" y="14" class="n">Asset 34.png</text><text x="463" y="14" class="d">None</text><text x="579" y="14" class="d">90. Layer 25</text><rect x="1263" y="0" width="361" height="18" fill="#737080"/></g>
<g transform="translate(0 978.400)"><use href="#row"/><use href="#eye"/><rect x="108" y="1" width="15" height="15" fill="#6a7bdc"/><text x="135" y="12" class="n">90</text><use href="#star" x="172" y="1"/><text x="195" y="14" class="n">Layer 25</text><text x="463" y="14" class="d">None</text><text x="579" y="14" class="d">83. Null 1</text><rect x="1263" y="0" width="361" height="18" fill="#515c8f"/></g>

<!-- watermark -->
<text x="1075" y="943" text-anchor="start" direction="rtl" textLength="230" lengthAdjust="spacingAndGlyphs" style="font-family:'DejaVu Sans',sans-serif;font-size:74px;font-weight:bold;fill:#fff;fill-opacity:.27;stroke:#fff;stroke-opacity:.27;stroke-width:1px">مستقل</text>
<text x="845" y="985" textLength="230" lengthAdjust="spacingAndGlyphs" style="font-size:38px;font-weight:bold;fill:#fff;fill-opacity:.27">mostaql.com</text>

<!-- playhead -->
<path d="M865.500 690V994" stroke="#2d8ceb"/>
<path d="M859 682h13v8l-5 9h-3l-5-9z" fill="#2d8ceb"/>

<!-- right strip -->
<rect x="1897" y="700" width="22" height="294" fill="#252525"/>
<path d="M1902 702h12v12l-6 6-6-6z" fill="#bbb"/>
<path d="M1905 738l7-7M1901 742a3.500 3.500 0 1 0 7 0 3.500 3.500 0 1 0-7 0" fill="none" stroke="#ccc" stroke-width="1.300"/><rect x="1908" y="732" width="8" height="10" fill="#ccc"/>
<rect x="1898" y="833" width="16" height="32" rx="8" fill="#363636"/>

<!-- status bar -->
<rect x="1" y="994" width="1918" height="19" fill="#232323"/>
<rect x="1" y="993" width="844" height="1" fill="#111"/>
<rect x="11" y="999" width="10" height="10" fill="none" stroke="#aaa"/><rect x="15" y="1003" width="10" height="9" fill="#333" stroke="#aaa"/>
<rect x="32" y="995" width="19" height="18" fill="#1c1c1c"/><circle cx="41" cy="1002" r="4.500" fill="none" stroke="#2d8ceb" stroke-width="1.500"/><rect x="41" y="1003" width="7" height="7" fill="none" stroke="#2d8ceb" stroke-width="1.500"/>
<path d="M59 1000l3-3h5l3 3v8l-3 3h-5l-3-3z" fill="#888"/>
<circle cx="88" cy="1002" r="5" fill="#bbb"/><path d="M82 1011c2-4 10-4 12 0z" fill="#bbb"/>
<text x="109" y="1010" style="fill:#999">Frame Render Time:</text>
<text x="241" y="1010" style="font-weight:bold;font-size:13.500px;fill:#8fb0aa">38ms</text>
<rect x="336" y="995" width="204" height="18" fill="#262626" stroke="#1c1c1c"/>
<text x="360" y="1010" style="fill:#8a8a8a">Toggle Switches / Modes</text>
<path d="M717 1006h9l-4.500-5z" fill="#ccc"/>
<rect x="747" y="1003" width="53" height="3" fill="#4a4a4a"/>
<ellipse cx="784" cy="1005" rx="4" ry="4.500" fill="#222" stroke="#bbb" stroke-width="1.500"/>
<path d="M816 1008l5-7 4 7zM824 1008l5-8 7 8z" fill="#ddd"/>
<rect x="1542" y="995" width="335" height="18" rx="9" fill="#2b2b2b"/>
</svg>
</body></html>
